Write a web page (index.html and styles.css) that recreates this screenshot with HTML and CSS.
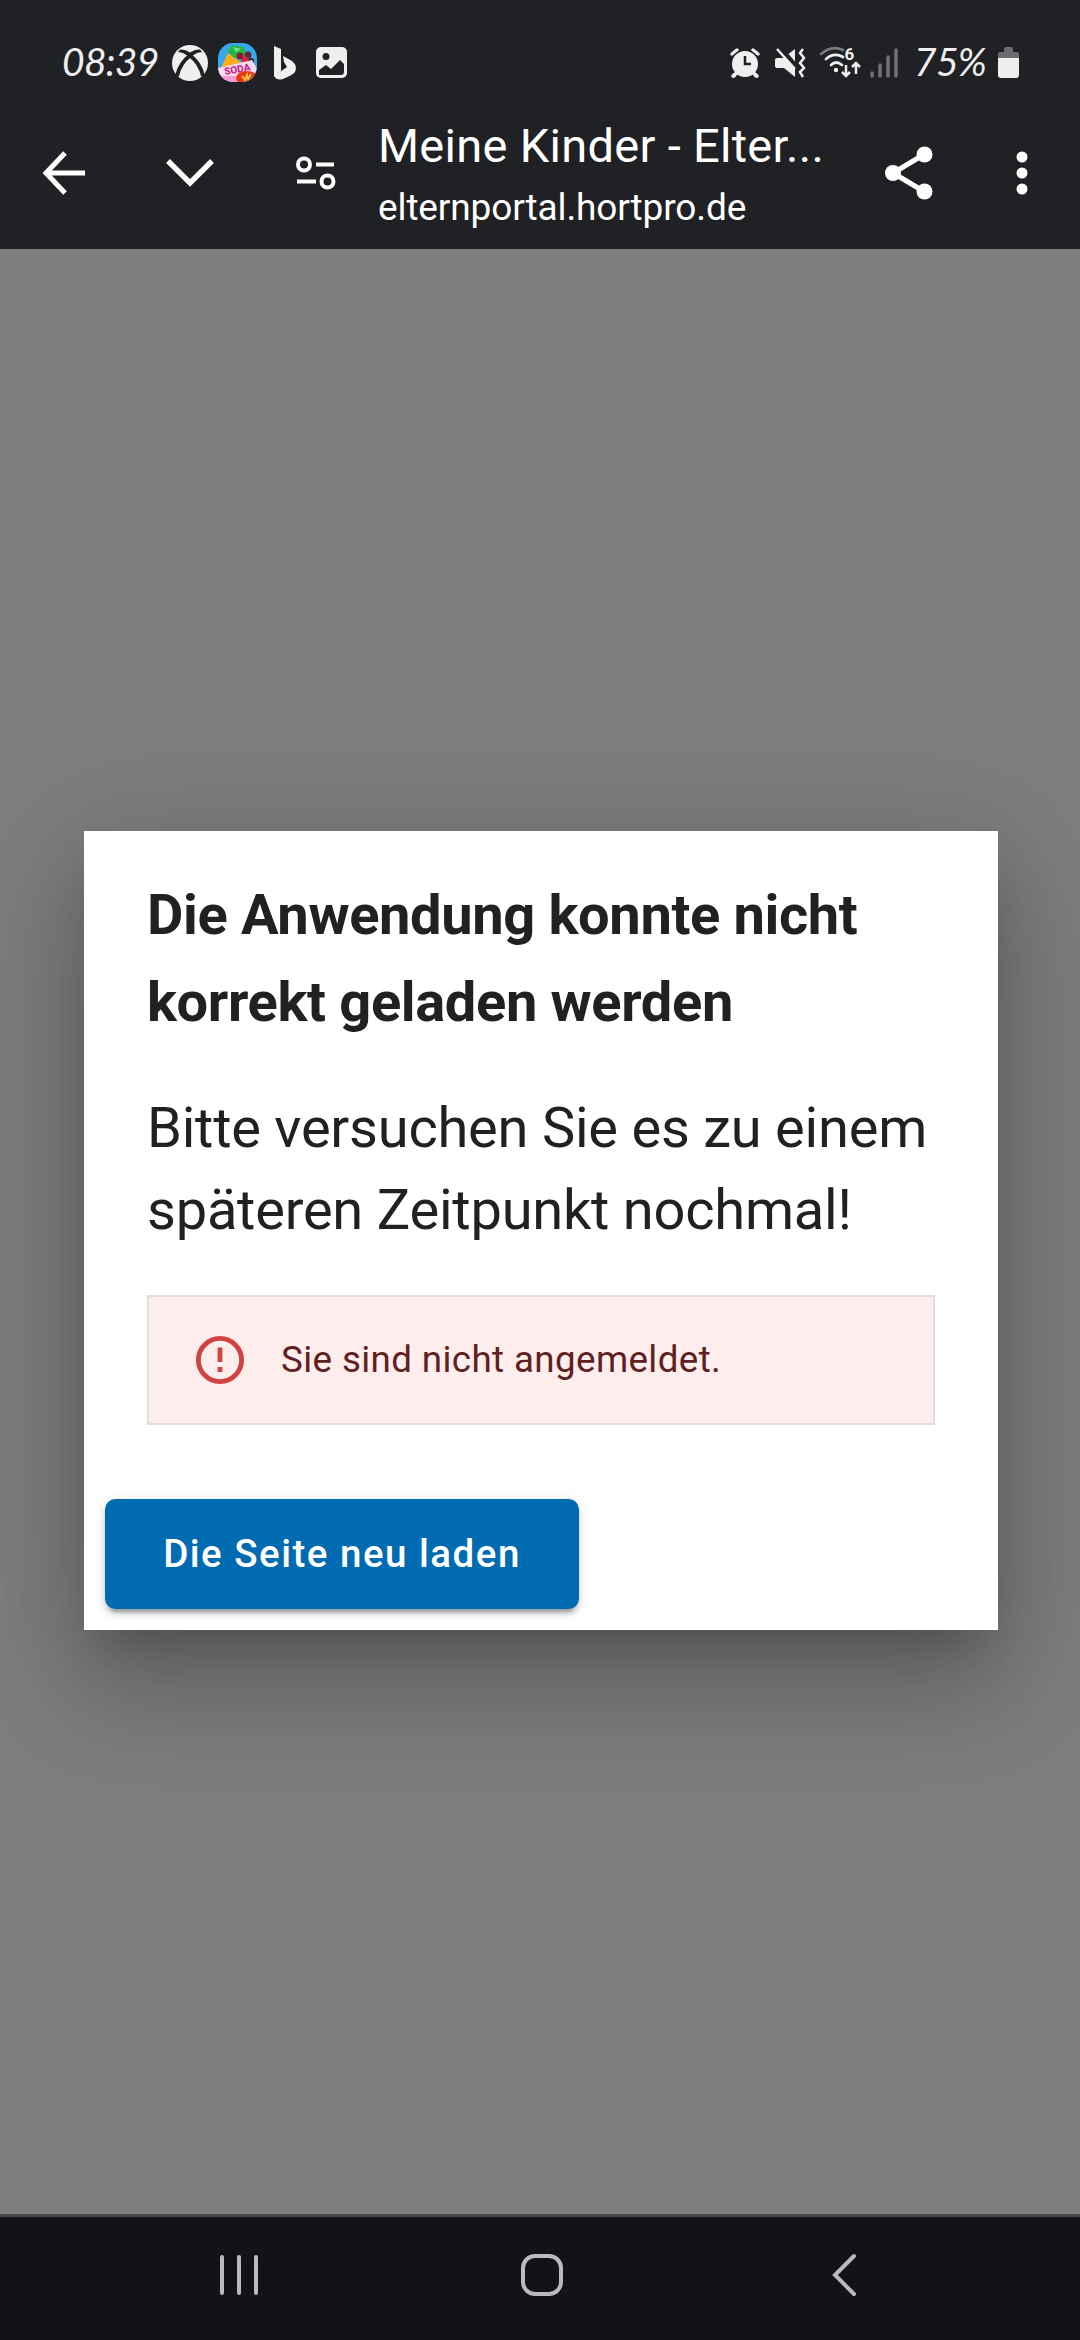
FILE: index.html
```html
<!DOCTYPE html>
<html lang="de">
<head>
<meta charset="utf-8">
<title>Meine Kinder - Elternportal</title>
<link rel="stylesheet" href="styles.css">
</head>
<body>
<div class="screen">
  <header class="top">
    <div class="status">
      <div class="status-group">
        <span class="clock">08:39</span>
        <svg class="xbox" width="36" height="36" viewBox="0 0 36 36"><circle cx="18" cy="18" r="18" fill="#efefef"/><path d="M18 10.500C12 15 7 22 5 31M18 10.500C24 15 29 22 31 31" fill="none" stroke="#202124" stroke-width="4"/><path d="M8 4.500Q13 4 18 7.500Q23 4 28 4.500L30 7Q24 7 18 13Q12 7 6 7Z" fill="#202124"/></svg>
        <svg class="game" width="39" height="39" viewBox="0 0 39 39"><defs><clipPath id="tile"><rect width="39" height="39" rx="15"/></clipPath></defs><g clip-path="url(#tile)"><path d="M0 0h39v39H0z" fill="#35a8ee"/><path d="M3 25 10 10l14 10-4 8z" fill="#ffae19"/><path d="m9 8 5-6 12 2 3 7-13 4z" fill="#27b34c"/><path d="m15 4 8 2-5 3z" fill="#73e685"/><circle cx="22" cy="13" r="3.500" fill="#8d1d26"/><circle cx="30" cy="12" r="3.500" fill="#652433"/><circle cx="27" cy="17" r="3.500" fill="#d52536"/><circle cx="33" cy="18" r="3" fill="#39211e"/><path d="M0 25 34 17l5 9-6 13H2z" fill="#ffd9ef"/><path d="M3 33h18v6H5z" fill="#f49bd4"/><ellipse cx="29" cy="35" rx="11" ry="7" fill="#e93711"/><path d="m24 33 3 4 2-5 1 4 3-5" fill="none" stroke="#ffc440" stroke-width="2"/><text class="soda" x="7" y="32" transform="rotate(-10 7 32)">SODA</text></g></svg>
        <svg class="bing" width="23" height="34" viewBox="0 0 23 34"><path d="M1 0 8 3V25L1 30Z M10 10 19 15Q25 20 22 26 20 29 10 33 4 35 1 30L14 21 11 16Z" fill="#efefef"/></svg>
        <svg width="31" height="31" viewBox="0 0 31 31"><rect width="31" height="31" rx="5" fill="#efefef"/><circle cx="10" cy="9.500" r="3.500" fill="#202124"/><path d="M3 28v-5l7-5 5 4 9-9 4 4v8q0 3-3 3Z" fill="#202124"/></svg>
      </div>
      <div class="status-group">
        <svg class="alarm" width="30" height="30" viewBox="0 0 30 30"><path d="M2 6 7 2M28 6 23 2M7 24 3 28M23 24l4 4" stroke="#efefef" stroke-width="3.500" stroke-linecap="round"/><circle cx="15" cy="16" r="14.500" fill="#202124"/><path d="M7 24 4 28M23 24l3 4" stroke="#efefef" stroke-width="3.500" stroke-linecap="round"/><circle cx="15" cy="16" r="13" fill="#efefef"/><path d="M15 8v8h6" fill="none" stroke="#202124" stroke-width="2.500"/></svg>
        <svg class="mute" width="31" height="30" viewBox="0 0 31 30"><path d="M2 10h6l12-9v28L9 20H2Q0 20 0 18v-6Q0 10 2 10Z" fill="#efefef"/><path d="M4-1 24 22" stroke="#202124" stroke-width="5"/><path d="M2 1 20 21" stroke="#efefef" stroke-width="2.500"/><path d="m28 1-3 4 4 5-4 5 4 5-4 4 3 5" fill="none" stroke="#efefef" stroke-width="2.500"/></svg>
        <svg class="wifi" width="41" height="32" viewBox="0 0 41 32"><g fill="none" stroke-width="2.700" stroke-linecap="round"><path d="M1 7Q12-2 23 3" stroke="#7c7d7f"/><path d="M6 12Q14 5 23 10M11 18q5-5 11 0" stroke="#efefef"/></g><circle cx="16" cy="23" r="2.200" fill="#efefef"/><path d="M26 18v11m-4-4 4 4 4-4M36 27V16m-4 4 4-4 4 4" fill="none" stroke="#efefef" stroke-width="2.500"/><text class="six" x="24.500" y="13">6</text></svg>
        <svg class="signal" width="28" height="30" viewBox="0 0 28 30"><path d="M2 25v3M10 17v11M18 9v19M26 2v26" stroke="#6f7072" stroke-width="3.500" stroke-linecap="round"/></svg>
        <span class="charge">75%</span>
        <svg width="21" height="31" viewBox="0 0 21 31"><path d="M0 12V7q0-2 2-2h4V2q0-2 2-2h5q2 0 2 2v3h4q2 0 2 2v5Z" fill="#6b6c6e"/><path d="M0 11h21v17q0 3-3 3H3q-3 0-3-3Z" fill="#efefef"/></svg>
      </div>
    </div>
    <div class="toolbar">
      <svg class="back" width="42" height="44" viewBox="0 0 42 44"><path d="M22 2 3 22l19 20M3 22h39" fill="none" stroke="#fff" stroke-width="5"/></svg>
      <svg class="down" width="48" height="30" viewBox="0 0 48 30"><path d="m2 3 22 22L46 3" fill="none" stroke="#fff" stroke-width="5.400"/></svg>
      <svg class="tune" width="40" height="34" viewBox="0 0 40 34"><g fill="none" stroke="#fff" stroke-width="4"><circle cx="8" cy="8.500" r="6"/><circle cx="31.500" cy="25.500" r="6"/><path d="M20 8.500h18M1 25.500h19"/></g></svg>
      <div class="page-id"><div class="page-title">Meine Kinder - Elter...</div><div class="page-url">elternportal.hortpro.de</div></div>
      <svg class="share" width="48" height="54" viewBox="0 0 48 54"><path d="M39 8.500 8 27l31 18.500" fill="none" stroke="#fff" stroke-width="5"/><g fill="#fff"><circle cx="8" cy="27" r="8"/><circle cx="39.500" cy="8.500" r="8"/><circle cx="39.500" cy="45.500" r="8"/></g></svg>
      <svg class="more" width="12" height="44" viewBox="0 0 12 44"><g fill="#fff"><circle cx="6" cy="6" r="5.500"/><circle cx="6" cy="22" r="5.500"/><circle cx="6" cy="38" r="5.500"/></g></svg>
    </div>
  </header>
  <main class="backdrop">
    <section class="dialog">
      <h1 class="headline">Die Anwendung konnte nicht<br>korrekt geladen werden</h1>
      <p class="message">Bitte versuchen Sie es zu einem<br>späteren Zeitpunkt nochmal!</p>
      <div class="alert">
        <svg width="48" height="48" viewBox="0 0 48 48"><circle cx="24" cy="24" r="21.600" fill="none" stroke="#d14343" stroke-width="4.800"/><path d="M24 11.500v14.500M24 31v5" stroke="#d14343" stroke-width="4.800"/></svg>
        <span class="alert-text">Sie sind nicht angemeldet.</span>
      </div>
      <button class="reload">Die Seite neu laden</button>
    </section>
  </main>
  <nav class="nav">
    <svg width="38" height="42" viewBox="0 0 38 42"><path d="M2 3v36M19 3v36M36 3v36" stroke="#b9babb" stroke-width="4" stroke-linecap="round"/></svg>
    <svg class="home" width="42" height="42" viewBox="0 0 42 42"><rect x="2" y="2" width="38" height="38" rx="12" fill="none" stroke="#b9babb" stroke-width="4"/></svg>
    <svg width="24" height="42" viewBox="0 0 24 42"><path d="M22 2 3 21l19 19" fill="none" stroke="#b9babb" stroke-width="4" stroke-linecap="round"/></svg>
  </nav>
</div>
</body>
</html>
```
FILE: styles.css
```css
* { box-sizing: border-box; }
body { margin: 0; font-family: Roboto, "Noto Sans", sans-serif; }
svg { display: block; flex: none; overflow: visible; }
.screen { width: 1080px; height: 2340px; display: flex; flex-direction: column; overflow: hidden; }

.top { height: 249px; background: #202124; color: #fff; position: relative; z-index: 1; }
.status { height: 99px; padding: 26px 61px 0 62px; display: flex; justify-content: space-between; }
.status-group { height: 73px; display: flex; align-items: center; }
.clock, .charge { padding-bottom: 3px; font: italic 400 39px/46px Lato, "Noto Sans", sans-serif; color: #efefef; white-space: nowrap; }
.clock { width: 110px; letter-spacing: -.7px; }
.game { margin-left: 10px; }
.bing { margin: 0 20px 0 16px; }
.mute { margin-left: 15px; }
.wifi { margin-left: 14px; }
.signal { margin-left: 9px; }
.charge { width: 84px; margin-left: 16px; letter-spacing: -.7px; }
.soda { font: bold 10px Roboto, sans-serif; fill: #c5167b; }
.six { font: bold 17px Roboto, sans-serif; fill: #efefef; }

.toolbar { height: 147px; padding-left: 43px; display: flex; align-items: center; }
.down { margin-left: 81px; }
.tune { margin-left: 82px; }
.page-id { width: 450px; margin-left: 42px; padding-top: 8px; white-space: nowrap; }
.page-title { font-size: 47px; line-height: 62px; letter-spacing: .3px; }
.page-url { font-size: 37px; line-height: 62px; letter-spacing: -.12px; }
.share { margin-left: 57px; }
.more { margin-left: 83px; }

.backdrop { flex: 1; background: #7e7e7e; padding: 582px 82px 0 84px; }
.dialog {
  height: 799px; padding: 41px 63px 0; background: #fff; color: #212121;
  box-shadow: 0 29px 39px -18px rgba(0,0,0,.2), 0 63px 100px 8px rgba(0,0,0,.14), 0 24px 121px 21px rgba(0,0,0,.12);
}
.headline { margin: 0; font-size: 56px; line-height: 87px; font-weight: 700; white-space: nowrap; letter-spacing: -.35px; }
.message { margin: 41px 0 0; font-size: 56px; line-height: 82px; white-space: nowrap; letter-spacing: -.23px; }
.alert { height: 130px; margin-top: 44px; padding-left: 47px; display: flex; align-items: center; gap: 37px; background: #fdeded; border: 2px solid #e1dddd; color: #5f2120; }
.alert-text { padding-bottom: 2px; font-size: 36.75px; letter-spacing: .38px; }
.reload {
  display: block; width: 474px; height: 110px; margin: 74px 0 0 -42px; padding: 0 0 2px; border: 0; border-radius: 10.5px;
  background: #006bb0; color: #fff; font: 500 38.5px Roboto, sans-serif; letter-spacing: 1.5px;
  box-shadow: 0 8px 3px -5px rgba(0,0,0,.2), 0 5px 5px rgba(0,0,0,.14), 0 3px 13px rgba(0,0,0,.12);
}
.nav { height: 126px; border-top: 3px solid #45484f; background: #121317; padding: 0 224px 7px 220px; display: flex; justify-content: space-between; align-items: center; position: relative; z-index: 1; }
.home { margin-right: 6px; }
```
